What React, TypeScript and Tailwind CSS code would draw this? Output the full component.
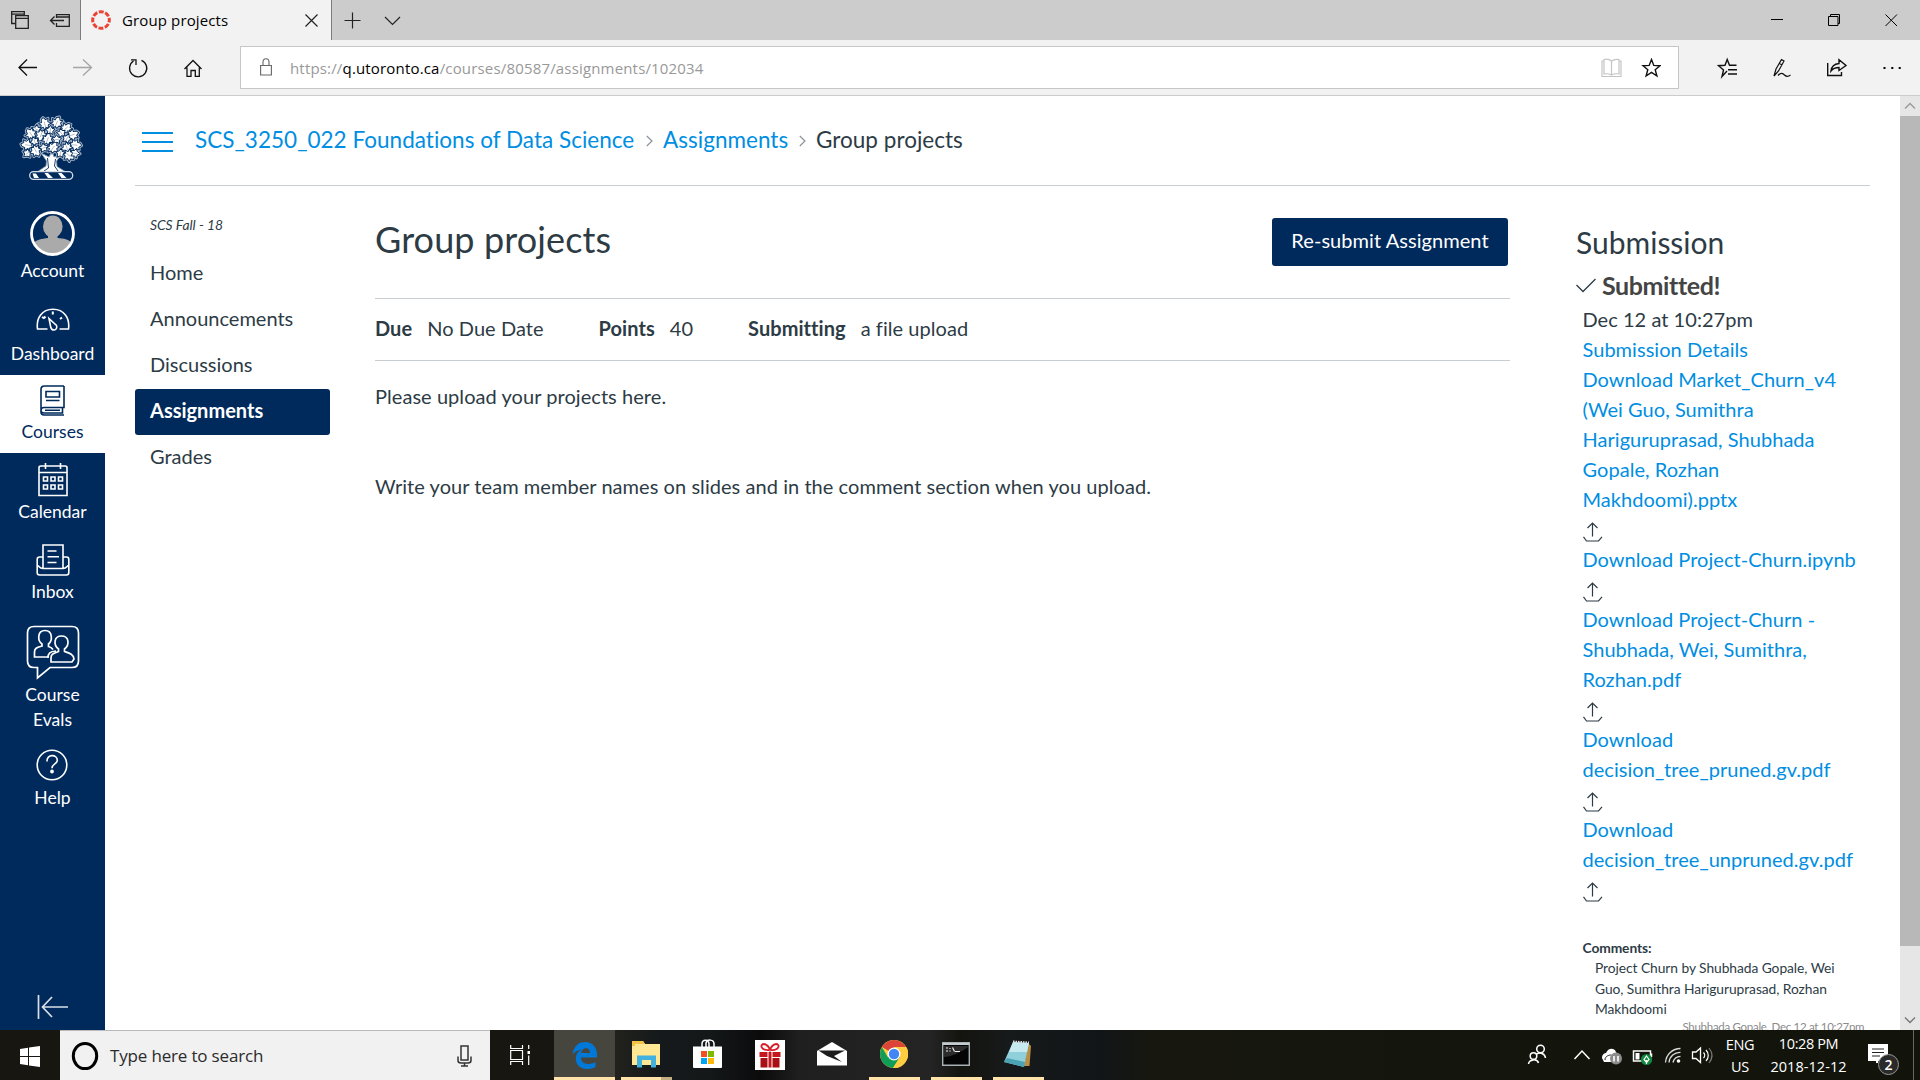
import React from "react";

const LEAF =
  "M0-7.2 L2-4.2 L5-5 L3.8-1.6 L6.800 1 L3.4 2 L2.6 5.400 L.3 4 L-1.6 6.800 L-2.6 3 L-6 3.6 L-4.1.6 L-6.400-2.4 L-3.1-2.2 L-2.600-5.4Z";
const SMALL_LEAF = "M-.5-5.5 L1.5-2.5 L4.800-2.300 L3 .5 L3.600 4 L.5 2.800 L-2.500 5 L-2.700 1.500 L-5.200-.5 L-2.300-2Z";

const LEAVES: [number, number, number, number][] = [
  [34, 14, -15, 1], [47, 13, 25, 1], [25, 20, -60, 0], [57, 19, 50, 1], [19, 25, -35, 1], [64, 26, 70, 1],
  [40, 21, 10, 0], [52, 24, 140, 0], [15, 37, -80, 1], [67, 37, 95, 1], [30, 26, 200, 1], [58, 30, 30, 0],
  [23, 33, -20, 0], [37, 31, 20, 1], [47, 31, 80, 0], [58, 40, 160, 1], [15, 46, 230, 0],
  [24, 43, 150, 1], [33, 40, 70, 0], [43, 40, 35, 1], [51, 46, 15, 0], [60, 48, 130, 1], [67, 46, 100, 0],
];

function TreeLogo() {
  return (
    <svg className="mr-[2px] h-20 w-[84px]" viewBox="0 0 84 80" fill="none">
      <path d="M31 45 L36.500 53 L36 58 L27 64 H56 L47 58.500 L46.500 53 L53 45 L44 49 L42 43 L39 49Z" fill="#fff" stroke="#8095ad" strokeWidth=".8" />
      <path d="M37.500 50 L38.500 60 L34 63 M45.500 51 L44.500 58 L48 63" stroke="#002a5c" strokeWidth=".9" />
      <g transform="translate(3.500 3) scale(.92)">
        {LEAVES.map(([x, y, r, big], i) => (
          <path key={i} d={big ? LEAF : SMALL_LEAF} transform={`translate(${x} ${y}) rotate(${r})`} fill="#002a5c" stroke="#a9b8ca" strokeWidth="3" strokeLinejoin="round" />
        ))}
        {LEAVES.map(([x, y, r, big], i) => (
          <g key={i} transform={`translate(${x} ${y}) rotate(${r})`}>
            <path d={big ? LEAF : SMALL_LEAF} fill="#fff" stroke="#002a5c" strokeWidth="1" strokeLinejoin="round" />
            <path d="M0-2.500 L0 3.500" stroke="#7f94ad" strokeWidth=".6" />
          </g>
        ))}
      </g>
      <rect x="19.700" y="63.700" width="43" height="7.600" rx="3.800" fill="#002a5c" stroke="#d3dce5" strokeWidth="1.300" />
      <path d="M22.500 65.500 h3.500 l3 4.500 h-5z M34.500 65 h3.500 l5 5 h-5z M48 65 h3.500 l5 5 h-5z" fill="#fff" />
    </svg>
  );
}

function NavItem({ label, icon, className }: { label: React.ReactNode; icon: React.ReactNode; className: string }) {
  return (
    <a className={`flex w-full flex-col items-center text-center text-[17.5px] leading-[25px] ${className}`}>
      {icon}
      <span>{label}</span>
    </a>
  );
}

function Upload() {
  return (
    <svg className="mt-[8px] mb-[2px] block h-5 w-5" viewBox="0 0 20 20" fill="none" stroke="#2d3b45" strokeWidth="1.200">
      <path d="M9.500 14.500V1 M4.500 6 L9.500 1 L14.500 6 M.5 14.800 L3.500 19 H15.500 L19 14.800" />
    </svg>
  );
}

function ChevronSep() {
  return (
    <svg className="mt-[3px] h-3 w-[7px]" viewBox="0 0 7 12" fill="none" stroke="#8b9299" strokeWidth="1.200">
      <path d="M.8 1 L6 6 L.8 11" />
    </svg>
  );
}

function BrowserChrome() {
  return (
    <header className="flex h-24 flex-col border-b border-[#cccccc] bg-[#f2f2f2] font-['Open_Sans',sans-serif] text-black">
      <div className="flex h-10 shrink-0 bg-[#cccccc]">
        <div className="flex w-20 items-center">
          <svg className="h-10 w-20" viewBox="0 0 80 40" fill="none" stroke="#222" strokeWidth="1.300">
            <path d="M15 23.500 H11.700 V11.700 H24.300 V15 M11.700 14.200 H24.300" />
            <path d="M15.700 15.700 H28.300 V28.300 H15.700Z M15.700 18.300 H28.300" />
            <path d="M56.500 18 V14.700 H69.300 V26.300 H56.500 V23 M56.500 17 H69.300 M50.500 20.500 H64 M54.500 16.500 L50.500 20.500 L54.500 24.500" />
          </svg>
        </div>
        <div className="flex w-[252px] items-center border-x border-[#7d7d7d] bg-[#f2f2f2] pl-2.5 pr-[13px]">
          <svg className="h-5 w-5 shrink-0" viewBox="0 0 20 20" fill="none">
            <circle cx="10" cy="10" r="8.300" stroke="#ea4335" strokeWidth="3" strokeDasharray="4.900 1.620" strokeDashoffset="2.450" />
          </svg>
          <span className="ml-[11px] text-[15px] leading-5 tracking-[0.13px]">Group projects</span>
          <svg className="ml-auto h-[13px] w-[13px]" viewBox="0 0 13 13" stroke="#222" strokeWidth="1.200">
            <path d="M.5.5 L12.500 12.500 M12.500.5 L.5 12.500" />
          </svg>
        </div>
        <svg className="ml-3 h-10 w-16" viewBox="0 0 64 40" fill="none" stroke="#222" strokeWidth="1.200">
          <path d="M0.500 20.500 H16.500 M8.500 12.500 V28.500 M41 17 L48.500 24.500 L56 17" />
        </svg>
        <svg className="ml-auto h-10 w-[170px]" viewBox="0 0 170 40" fill="none" stroke="#000" strokeWidth="1">
          <path d="M21 19.500 H33 M78.500 16.500 H88 V25.500 H78.500Z M80.500 16.500 V14.500 H89.500 V23.500 H88 M135.500 14.500 L147 26 M147 14.500 L135.500 26" />
        </svg>
      </div>
      <div className="flex h-[55px] items-center">
        <svg className="h-[55px] w-60 shrink-0" viewBox="0 40 240 55" fill="none" stroke="#111" strokeWidth="1.300">
          <path d="M37 67.500 H19 M27 59.500 L19 67.500 L27 75.500" />
          <path d="M73 67.500 H91 M83 59.500 L91.500 67.500 L83 75.500" stroke="#a5a5a5" />
          <path d="M133.500 61 A8.600 8.600 0 1 0 141.500 60.300 M131 59.800 H136 V65" />
          <path d="M184.500 69 L193 60.500 L201.500 69 M187 67.500 V76.300 H191 V70.500 H195.300 V76.300 H199.300 V67.500" />
        </svg>
        <div className="flex h-[43px] w-[1439px] items-center border border-[#c6c6c6] bg-white pl-[19px] pr-[17px]">
          <svg className="-mt-0.5 h-[18px] w-3" viewBox="0 0 12 18" fill="none" stroke="#666" strokeWidth="1.100">
            <path d="M.6 7.500 H11.400 V17 H.6Z M3 7.500 V4 A3 3.300 0 0 1 9 4 V7.500" />
          </svg>
          <span className="ml-[18px] text-[15px] leading-5 tracking-[0.17px] text-[#999999]">
            https://<span className="text-black">q.utoronto.ca</span>/courses/80587/assignments/102034
          </span>
          <svg className="ml-auto h-5 w-[60px]" viewBox="0 0 60 20" fill="none">
            <path d="M10.500 3 C8 1 5 1 3 1.500 V16 C6 15.500 8 15.500 10.500 17 C13 15.500 15 15.500 18 16 V1.500 C15 1 13 1 10.500 3Z M10.500 3 V17 M3 3 H1 V18.500 H20 V3 H18" stroke="#c4c4c4" strokeWidth="1.200" />
            <path d="M50.500 1.500 L52.800 7.400 L59 7.700 L54.200 11.700 L55.900 18 L50.500 14.400 L45.100 18 L46.800 11.700 L42 7.700 L48.200 7.400Z" stroke="#111" strokeWidth="1.400" />
          </svg>
        </div>
        <svg className="h-[55px] w-[241px] shrink-0" viewBox="1679 40 241 55" fill="none" stroke="#111" strokeWidth="1.400">
          <path d="M1727 71 L1722 76.500 L1723.500 70 L1718.500 65.700 L1725 65.300 L1727.200 59.500 L1729.500 65.300 H1736.500 M1728 69.700 H1737 M1728 74 H1737" />
          <path d="M1774 76 L1776 69 L1781.500 59.500 L1784 61 L1778.500 71 Z M1779 63 L1782 65 M1778 75.500 C1781 72 1783 73.500 1784.500 75 S1788 77 1790.500 75" strokeWidth="1.200" />
          <path d="M1827.700 63 V75.500 H1841.500 V72 M1831 71 C1831.500 66.500 1834 64 1839 63.500 V59.800 L1846 65.500 L1839 70.500 V67.500 C1835 67.500 1833 68.500 1831 71Z" />
          <path d="M1883.500 68 h2 M1891.300 68 h2 M1898.700 68 h2" stroke="#000" strokeWidth="2.200" />
        </svg>
      </div>
    </header>
  );
}

function Sidebar() {
  const ic = "block shrink-0";
  return (
    <nav className="flex w-[105px] shrink-0 flex-col bg-[#002a5c] text-white">
      <div className="flex h-[92px] justify-center pt-3">
        <TreeLogo />
      </div>
      <NavItem
        className="h-[104px] pt-[23px]"
        label="Account"
        icon={
          <svg className={`${ic} mb-[2px] h-[45px] w-[45px]`} viewBox="0 0 45 45">
            <clipPath id="face"><circle cx="22.500" cy="22.500" r="20" /></clipPath>
            <g clipPath="url(#face)" fill="#aaaaaa">
              <ellipse cx="22.800" cy="15.500" rx="9.800" ry="11" />
              <path d="M18 22 h9.500 v5 C33 27.500 41 28 42 34 V45 H3 V34 C5 28 12 28 18 27Z" />
            </g>
            <circle cx="22.500" cy="22.500" r="21" fill="none" stroke="#fff" strokeWidth="2.800" />
          </svg>
        }
      />
      <NavItem
        className="h-[83px] pt-4"
        label="Dashboard"
        icon={
          <svg className={`${ic} mb-[10px] h-[23px] w-[34px]`} viewBox="0 0 34 23" fill="none" stroke="#fff" strokeWidth="1.600">
            <path d="M11.500 21 H1.500 C0 10 6 1.200 17 1.200 S34 10 32.500 21 H23.500" />
            <path d="M13 10.500 L20.500 17.500 C21.500 20 20 22 18 22 C16 22 15 20.500 14.700 19Z" />
            <path d="M6 9 L8.500 10.500 M16.800 3.500 V6.500 M26 9.500 L24 11 M8 8.500 l1.500 1.500" strokeWidth="2" />
          </svg>
        }
      />
      <NavItem
        className="h-[78px] bg-white pt-[10px] text-[#002a5c]"
        label="Courses"
        icon={
          <svg className={`${ic} mb-[3px] h-[31px] w-[25px]`} viewBox="0 0 25 31" fill="none" stroke="#002a5c" strokeWidth="1.600">
            <path d="M24 1 H4.500 C2 1 1 2 1 4.500 V27 C1 29 2 30 4 30 H24 M24 1 V22.500 H4 C0 22.500 0 28 4 28 H22.500 V23 M6 6.500 H19.500 V12 H6Z M6 15.500 H19.500 M5 25.300 H20" />
          </svg>
        }
      />
      <NavItem
        className="h-[80px] pt-[10px]"
        label="Calendar"
        icon={
          <svg className={`${ic} mb-[2px] h-[34px] w-[30px]`} viewBox="0 0 30 34" fill="none" stroke="#fff" strokeWidth="1.600">
            <path d="M1 32.500 V4.500 C1 3.500 2 3 3 3 H27 C28 3 29 3.500 29 4.500 V32.500Z M1 9.500 H29 M7.500 0 V6 M22.500 0 V6" />
            <path d="M5.500 14 h4 v4 h-4z M13 14 h4 v4 h-4z M20.500 14 h4 v4 h-4z M5.500 22 h4 v4 h-4z M13 22 h4 v4 h-4z M20.500 22 h4 v4 h-4z" />
          </svg>
        }
      />
      <NavItem
        className="h-[80px] pt-[11px]"
        label="Inbox"
        icon={
          <svg className={`${ic} mb-[3px] h-[32px] w-[34px]`} viewBox="0 0 34 32" fill="none" stroke="#fff" strokeWidth="1.600">
            <path d="M7 13 H3.500 C2 13 1.200 14 1.200 15.500 V28.500 C1.200 30 2 31 3.500 31 H30.500 C32 31 32.800 30 32.800 28.500 V15.500 C32.800 14 32 13 30.500 13 H27 M7 1 H27 V24.500 H7Z M1.200 21.500 C3 21.500 3 24.500 7 24.500 M32.800 21.500 C31 21.500 31 24.500 27 24.500 M11.500 7 H20.500 M11.500 12.700 H23 M11.500 18.500 H20.500" />
          </svg>
        }
      />
      <NavItem
        className="h-[127px] pt-[12px]"
        label={<>Course<br />Evals</>}
        icon={
          <svg className={`${ic} mb-[2px] h-[55px] w-[54px]`} viewBox="0 0 54 55" fill="none" stroke="#fff" strokeWidth="1.700">
            <path d="M8 1.500 H46 C50 1.500 52.500 4 52.500 8 V36 C52.500 40 50 42.500 46 42.500 H24 L11.500 53 V42.500 H8 C4 42.500 1.500 40 1.500 36 V8 C1.500 4 4 1.500 8 1.500Z" />
            <path d="M22 32 H8.500 V27 C8.500 23 11 22.500 16 21 V19 C11.500 16 11 5.500 19 5.500 S26.500 16 22.500 19 V21.500 C25 22 26 23 27 24.500" />
            <path d="M25 37 V33 C25 28.500 28 28.500 32.500 26.500 V24 C27 19.500 28 11 35.500 11 S44 19.500 38.500 24 V26.500 C43 28 47.500 29 48 34 L46 37Z M22 33 C22 28 24 26.500 30 26" />
          </svg>
        }
      />
      <NavItem
        className="h-[80px] pt-[9px]"
        label="Help"
        icon={
          <svg className={`${ic} mb-[4px] mr-[1px] h-[32px] w-[32px]`} viewBox="0 0 32 32" fill="none" stroke="#fff" strokeWidth="1.600">
            <circle cx="16" cy="16" r="14.800" />
            <path d="M11 12.500 C10.500 4.800 21.500 4.800 21.300 11.500 C21.200 15 16 15 16 19.200" />
            <circle cx="16" cy="22.500" r="1.100" fill="#fff" />
          </svg>
        }
      />
      <svg className="mx-auto mb-[10px] mt-auto h-[26px] w-[32px]" viewBox="0 0 32 26" fill="none" stroke="#fff" strokeWidth="1.700">
        <path d="M1.500 1 V25 M31 13 H6 M15 3 L5.500 13 L15 23" strokeOpacity=".85" />
      </svg>
    </nav>
  );
}

const links: [string, string[]][] = [
  ["a", ["Download Market_Churn_v4", "(Wei Guo, Sumithra", "Hariguruprasad, Shubhada", "Gopale, Rozhan", "Makhdoomi).pptx"]],
  ["b", ["Download Project-Churn.ipynb"]],
  ["c", ["Download Project-Churn -", "Shubhada, Wei, Sumithra,", "Rozhan.pdf"]],
  ["d", ["Download", "decision_tree_pruned.gv.pdf"]],
  ["e", ["Download", "decision_tree_unpruned.gv.pdf"]],
];

function Page() {
  return (
    <div className="flex min-w-0 flex-1 flex-col overflow-hidden pl-[30px] pr-[30px] text-[#2d3b45]">
      <div className="flex h-[90px] shrink-0 items-center border-b border-[#c7cdd1] pl-[7px] text-[22.5px]">
        <svg className="mt-[2px] h-[22px] w-[31px]" viewBox="0 0 31 22" stroke="#008ee2" strokeWidth="2">
          <path d="M0 2 H31 M0 11 H31 M0 20 H31" />
        </svg>
        <div className="ml-[22px] flex items-center whitespace-nowrap pb-[2px] tracking-[0.02px]">
          <span className="w-[440px] text-[#008ee2]">SCS_3250_022 Foundations of Data Science</span>
          <span className="ml-[11px]"><ChevronSep /></span>
          <span className="ml-[10px] w-[125px] text-[#008ee2]">Assignments</span>
          <span className="ml-[11px]"><ChevronSep /></span>
          <span className="ml-[10px]">Group projects</span>
        </div>
      </div>
      <div className="flex min-h-0 flex-1">
        <div className="w-[195px] shrink-0 pt-[29px]">
          <div className="pl-[15px] text-[13.8px] italic leading-5">SCS Fall - 18</div>
          <div className="mt-[16px] flex flex-col text-[20px] leading-[42px]">
            {["Home", "Announcements", "Discussions", "Assignments", "Grades"].map((t) => (
              <a key={t} className={t === "Assignments" ? "h-[46px] rounded-[3px] bg-[#002a5c] pl-[15px] font-bold text-white" : "h-[46px] pl-[15px]"}>
                {t}
              </a>
            ))}
          </div>
        </div>
        <main className="ml-[45px] w-[1135px] shrink-0 text-[20px] leading-[30px] tracking-[0.055px]">
          <div className="flex h-[113px] items-start justify-between border-b border-[#c7cdd1] pt-[32px]">
            <h1 className="text-[36px] leading-[43px] tracking-[0.12px]">Group projects</h1>
            <button className="mr-[2px] h-12 w-[236px] rounded-[3px] bg-[#002a5c] pb-[4px] text-white">Re-submit Assignment</button>
          </div>
          <div className="flex h-[62px] items-center border-b border-[#c7cdd1] pb-[3px]">
            <b>Due</b><span className="ml-[15px]">No Due Date</span>
            <b className="ml-[55px]">Points</b><span className="ml-[15px]">40</span>
            <b className="ml-[55px]">Submitting</b><span className="ml-[15px]">a file upload</span>
          </div>
          <p className="mt-[20px]">Please upload your projects here.</p>
          <p className="mt-[60px]">Write your team member names on slides and in the comment section when you upload.</p>
        </main>
        <aside className="ml-[66px] shrink-0 pt-[38px] text-[20px] leading-[30px]">
          <h2 className="text-[30px] leading-[36px]">Submission</h2>
          <div className="mt-[8px] flex h-[36px] items-center pb-[2px] text-[25px] font-bold leading-[34px] tracking-[-0.4px] text-[#444444]">
            <svg className="mr-[6px] h-[15px] w-5" viewBox="0 0 20 15" fill="none" stroke="#2d3b45" strokeWidth="1.300">
              <path d="M.5 7 L7 13.500 L19.500 1" />
            </svg>
            Submitted!
          </div>
          <div className="pl-[6.5px] tracking-[0.04px]">
            <div>Dec 12 at 10:27pm</div>
            <a className="block text-[#008ee2]">Submission Details</a>
            {links.map(([k, lines]) => (
              <div key={k}>
                <a className="block text-[#008ee2]">
                  {lines.map((l) => <span key={l} className="block whitespace-nowrap">{l}</span>)}
                </a>
                <Upload />
              </div>
            ))}
            <div className="mt-[36px] text-[13.8px] leading-5 tracking-normal">
              <div className="font-bold tracking-[-0.1px]">Comments:</div>
              <p className="whitespace-nowrap pl-[12.5px] leading-[20.500px] tracking-[-0.06px]">
                Project Churn by Shubhada Gopale, Wei<br />Guo, Sumithra Hariguruprasad, Rozhan<br />Makhdoomi
              </p>
              <p className="-mt-[3px] whitespace-nowrap pl-[100px] text-[11.5px] leading-5 tracking-[-0.29px] text-[#8b8b8b]">Shubhada Gopale, Dec 12 at 10:27pm</p>
            </div>
          </div>
        </aside>
      </div>
    </div>
  );
}

function Scrollbar() {
  return (
    <div className="flex w-5 shrink-0 flex-col bg-[#e6e6e6]">
      <svg className="h-5 w-5" viewBox="0 0 20 20" fill="none" stroke="#9a9a9a" strokeWidth="1.400"><path d="M5 12.500 L10 7.500 L15 12.500" /></svg>
      <div className="h-[830px] bg-[#b8b8b8]" />
      <svg className="mt-auto h-5 w-5" viewBox="0 0 20 20" fill="none" stroke="#777" strokeWidth="1.400"><path d="M5 7.500 L10 12.500 L15 7.500" /></svg>
    </div>
  );
}

function TaskIcon({ children, line, active, stacked }: { children?: React.ReactNode; line?: boolean; active?: boolean; stacked?: boolean }) {
  return (
    <div className={active ? "flex h-full w-[61px] flex-col items-center bg-[#46463f]" : "flex h-full w-[62px] flex-col items-center"}>
      <div className="flex h-[47px] items-center justify-center">{children}</div>
      {line && (
        <div className={active ? "flex h-[3px] w-full justify-end bg-[#ffe3a8]" : "flex h-[3px] w-[51px] justify-end bg-[#ffe3a8]"}>
          {stacked && <div className="h-full w-[11px] bg-[#c4ae83]" />}
        </div>
      )}
    </div>
  );
}

function Taskbar() {
  return (
    <footer className="flex h-[50px] bg-[linear-gradient(90deg,#171610_0px,#171610_554px,#23231d_610px,#15191b_660px,#141819_710px,#0b0b0c_760px,#1f1f20_800px,#242425_930px,#14140f_960px,#171a1b_1010px,#121517_1100px,#171710_1150px,#14160d_1400px,#12140c_1920px)] font-['Open_Sans',sans-serif] text-white">
      <div className="flex w-[60px] items-center justify-center">
        <svg className="mt-[2px] h-[21px] w-5" viewBox="0 0 20 21" fill="#fff">
          <path d="M0 3 L8 1.800 V10 H0Z M9 1.600 L20 0 V10 H9Z M0 11 H8 V19.200 L0 18Z M9 11 H20 V21 L9 19.400Z" />
        </svg>
      </div>
      <div className="flex w-[430px] items-center border-t border-[#b9b9b9] bg-[#f1f1f1] pl-[11px] pr-[18px] text-[#2b2b2b]">
        <svg className="h-[30px] w-[28px]" viewBox="0 0 28 30" fill="none" stroke="#000">
          <ellipse cx="14" cy="15" rx="11.700" ry="12.600" strokeWidth="3" />
        </svg>
        <span className="ml-[11px] text-[17px] tracking-[-0.17px]">Type here to search</span>
        <svg className="ml-auto h-[22px] w-[15px]" viewBox="0 0 15 22" fill="none" stroke="#333" strokeWidth="1.500">
          <path d="M4 1 H11 V15 H4Z M1 11.500 V15.500 C1 17.500 2 18 4 18 H11 C13 18 14 17.500 14 15.500 V11.500 M7.500 18 V21 M4 21 H11" />
        </svg>
      </div>
      <div className="flex w-[64px] items-center justify-center">
        <svg className="ml-[-5px] h-5 w-5" viewBox="0 0 20 20" fill="none" stroke="#fff" strokeWidth="1.200">
          <path d="M.7 0 V3.500 H12.500 V0 M.7 5.500 H12.500 V14.500 H.7Z M.7 20 V16.500 H12.500 V20 M18.700 0 V4 M18.700 10.500 V20" />
          <path d="M17.500 6 h2.500 v3 h-2.500z" fill="#fff" stroke="none" />
        </svg>
      </div>
      <TaskIcon line active>
        <svg className="mr-px mt-1 h-[27px] w-[25px]" viewBox="0 0 25 27" fill="#0078d7">
          <path d="M.5 12.500 C1.500 4.500 6.500 0 13 0 C20.500 0 25 5.500 25 12.500 V15.500 H9 C9 20 12.500 22 16.500 22 C19 22 21.500 21.300 23.500 20 V25 C21 26.500 18 27 15 27 C8 27 3.800 22.500 3.800 16.500 C3.800 12 6.500 9 9.500 7.500 C5.500 8 2.500 10 .5 12.500Z M9.200 11 H18 C18 7.800 16.500 6.200 14 6.200 C11.300 6.200 9.500 8.300 9.200 11Z" />
        </svg>
      </TaskIcon>
      <TaskIcon line stacked>
        <svg className="h-[28px] w-[28px]" viewBox="0 0 28 28">
          <path d="M0 1 H11 L13 4 H28 V25 H0Z" fill="#ffe794" />
          <path d="M0 1 H11 L13 4 H3 V6 H0Z" fill="#f5c445" />
          <path d="M5 27.500 V15.500 H24 V27.500 H19 V20 H10 V27.500Z" fill="#41b1e0" />
        </svg>
      </TaskIcon>
      <TaskIcon>
        <svg className="mr-px h-[29px] w-[29px]" viewBox="0 0 29 29">
          <path d="M9 8 V5 C9 0 16 0 16 5 V8 M13 8 V4 C14 0 21 0 21 5 V8" fill="none" stroke="#fff" strokeWidth="1.500" />
          <path d="M0 7.500 H29 V28 Q29 29 28 29 H1 Q0 29 0 28Z" fill="#fff" />
          <path d="M8 12 h6 v6 h-6z" fill="#f25022" /><path d="M15 12 h6 v6 h-6z" fill="#7fba00" />
          <path d="M8 19 h6 v6 h-6z" fill="#00a4ef" /><path d="M15 19 h6 v6 h-6z" fill="#ffb900" />
        </svg>
      </TaskIcon>
      <TaskIcon>
        <svg className="mt-0.5 h-[30px] w-[30px]" viewBox="0 0 30 30">
          <path d="M0 0 H30 V30 H0Z" fill="#fff" />
          <path d="M14 10 C5 10.500 5 4 9 4 C12 4.500 14 7 15 10 C16 7 18 4.500 21 4 C25 4 25 10.500 16 10" fill="none" stroke="#d81e28" strokeWidth="1.800" />
          <path d="M4.500 12 H12.500 V17 H4.500Z M17.500 12 H25.500 V17 H17.500Z M13.500 12 h3 v15.500 h-3z" fill="#c4161c" />
          <path d="M5.500 18 H12.500 V27.500 H5.500Z M17.500 18 H24.500 V27.500 H17.500Z" fill="#a80f14" />
        </svg>
      </TaskIcon>
      <TaskIcon>
        <svg className="h-[24px] w-[30px]" viewBox="0 0 30 24">
          <path d="M0 9 L15 0 L30 9 V23.500 H0Z" fill="#fff" />
          <path d="M1.500 8.500 H28 L17 14 L25 20 L10 14Z" fill="#1d1d1e" />
        </svg>
      </TaskIcon>
      <TaskIcon line>
        <svg className="h-7 w-7" viewBox="0 0 28 28">
          <circle cx="14" cy="14" r="14" fill="#ffcd40" />
          <path d="M14 14 L1.900 7 A14 14 0 0 1 26.100 7 H14Z" fill="#db4437" />
          <path d="M1.900 7 A14 14 0 0 0 13 28 L20 17 L14 14 L8 17.500Z" fill="#0f9d58" />
          <path d="M14 7.500 H26.500 A14 14 0 0 1 13 28 L20 17Z" fill="#ffcd40" />
          <circle cx="14" cy="14" r="6.500" fill="#fff" /><circle cx="14" cy="14" r="5.200" fill="#4285f4" />
        </svg>
      </TaskIcon>
      <TaskIcon line>
        <svg className="h-6 w-7" viewBox="0 0 28 24">
          <path d="M.7.7 H27.300 V23.300 H.7Z" fill="#050505" stroke="#a9b0b4" strokeWidth="1.400" />
          <path d="M1 2 H27" stroke="#c6cdd1" strokeWidth="2" />
          <path d="M2 23 V15 C8 15 20 10 26 5 V4 H2Z" fill="#2c2c2c" />
          <path d="M4 6 h2 M4 9 h2 M8 6 v1 M8 8.500 v1 M10.500 5.500 L12.500 9.500 M13 9.500 H18" stroke="#eee" strokeWidth="1.200" />
        </svg>
      </TaskIcon>
      <TaskIcon line>
        <svg className="h-7 w-7" viewBox="0 0 28 28">
          <path d="M24 3 L27 6 L25.500 26 L20 26Z" fill="#b98d42" />
          <path d="M9 2 L25 3 L20 27 L0 22Z" fill="#8fd0db" />
          <path d="M9 2 L25 3 L23 12 L5 12Z" fill="#c7eaf0" />
          <path d="M3 18 L21 22 L20 27 L0 22Z" fill="#4aa3b3" />
          <path d="M9 1.500 L25 2.500" stroke="#ddd" strokeWidth="2" strokeDasharray="1.500 1" />
        </svg>
      </TaskIcon>
      <svg className="ml-auto h-[50px] w-[205px]" viewBox="1515 1030 205 50" fill="none" stroke="#fff" strokeWidth="1.500">
        <circle cx="1540.500" cy="1049" r="3.800" /><circle cx="1533.500" cy="1056" r="3.300" />
        <path d="M1528.500 1064 C1529 1059.500 1537 1058 1538.500 1063 M1536 1054.500 C1540 1051.500 1545 1053.500 1545.500 1058" />
        <path d="M1574.500 1059 L1582 1051 L1589.500 1059" />
        <path d="M1602 1058 C1602 1054 1605 1053 1606 1053 C1608 1048 1614 1047 1616 1052 L1619 1058 L1612 1062 H1604Z" fill="#fff" stroke="none" />
        <path d="M1605 1060 C1605 1056 1609 1055 1611 1055" stroke="#222" strokeWidth="1" />
        <circle cx="1616" cy="1058.500" r="6" fill="#8c8c8c" stroke="none" /><path d="M1614 1056 V1061.500 M1618 1056 V1061.500" strokeWidth="1.600" />
        <path d="M1633.500 1051 H1650.500 V1061 H1633.500Z M1651.500 1053.500 V1057" /><path d="M1635.500 1053 h4 v6.500 h-4z" fill="#fff" stroke="none" />
        <circle cx="1646.500" cy="1059.500" r="5.600" fill="#10893e" stroke="none" />
        <path d="M1646.500 1056 L1649 1059.500 L1646.500 1062.500 L1644 1059.500Z M1646.500 1060 V1064" strokeWidth="1.200" />
        <path d="M1665.500 1062.500 A15 15 0 0 1 1680.500 1048.500 M1669 1062.500 A11 11 0 0 1 1680.500 1052.300 M1673 1062.500 A8 8 0 0 1 1680.500 1056.300" strokeWidth="1.300" strokeOpacity=".85" />
        <circle cx="1678.500" cy="1061" r="1.800" fill="#fff" stroke="none" />
        <path d="M1692.500 1052 H1696 L1700.500 1048 V1062.500 L1696 1058.500 H1692.500Z M1703.500 1052.500 C1705 1054 1705 1056.500 1703.500 1058" strokeWidth="1.300" />
        <path d="M1706 1050 C1709 1053 1709 1058 1706 1061" strokeWidth="1.200" /><path d="M1709 1048 C1713 1053 1713 1058 1709 1063" stroke="#777" strokeWidth="1.200" />
      </svg>
      <div className="flex w-[40px] flex-col items-center pt-[4px] text-[14.5px] leading-[22px] tracking-[-0.3px]">
        <span>ENG</span><span>US</span>
      </div>
      <div className="flex w-[97px] flex-col items-center pt-[3px] text-[14.5px] leading-[22.500px] tracking-[-0.4px]">
        <span>10:28 PM</span><span className="tracking-[0.05px]">2018-12-12</span>
      </div>
      <div className="flex w-[57px] items-center border-r border-[#666] pl-[11px]">
        <div className="relative h-[34px] w-[33px]">
          <svg className="mt-px h-6 w-5" viewBox="0 0 20 24" fill="#fff">
            <path d="M0 5 H20 V22 H10 V24 H8 V22 H0Z" /><path d="M4 10 H16 M4 13.500 H16 M4 17 H12" stroke="#222" strokeWidth="1.200" />
          </svg>
          <span className="absolute left-[10px] top-[16px] flex h-[21px] w-[21px] items-center justify-center rounded-full border border-[#999] bg-[#2a2a2a] text-[14px] font-semibold">2</span>
        </div>
      </div>
      <div className="w-[6px]" />
    </footer>
  );
}

export default function App() {
  return (
    <div className="flex h-[1080px] w-[1920px] flex-col overflow-hidden bg-white font-['Lato',sans-serif] [font-variant-ligatures:none]">
      <BrowserChrome />
      <div className="flex h-[934px] min-h-0">
        <Sidebar />
        <Page />
        <Scrollbar />
      </div>
      <Taskbar />
    </div>
  );
}
